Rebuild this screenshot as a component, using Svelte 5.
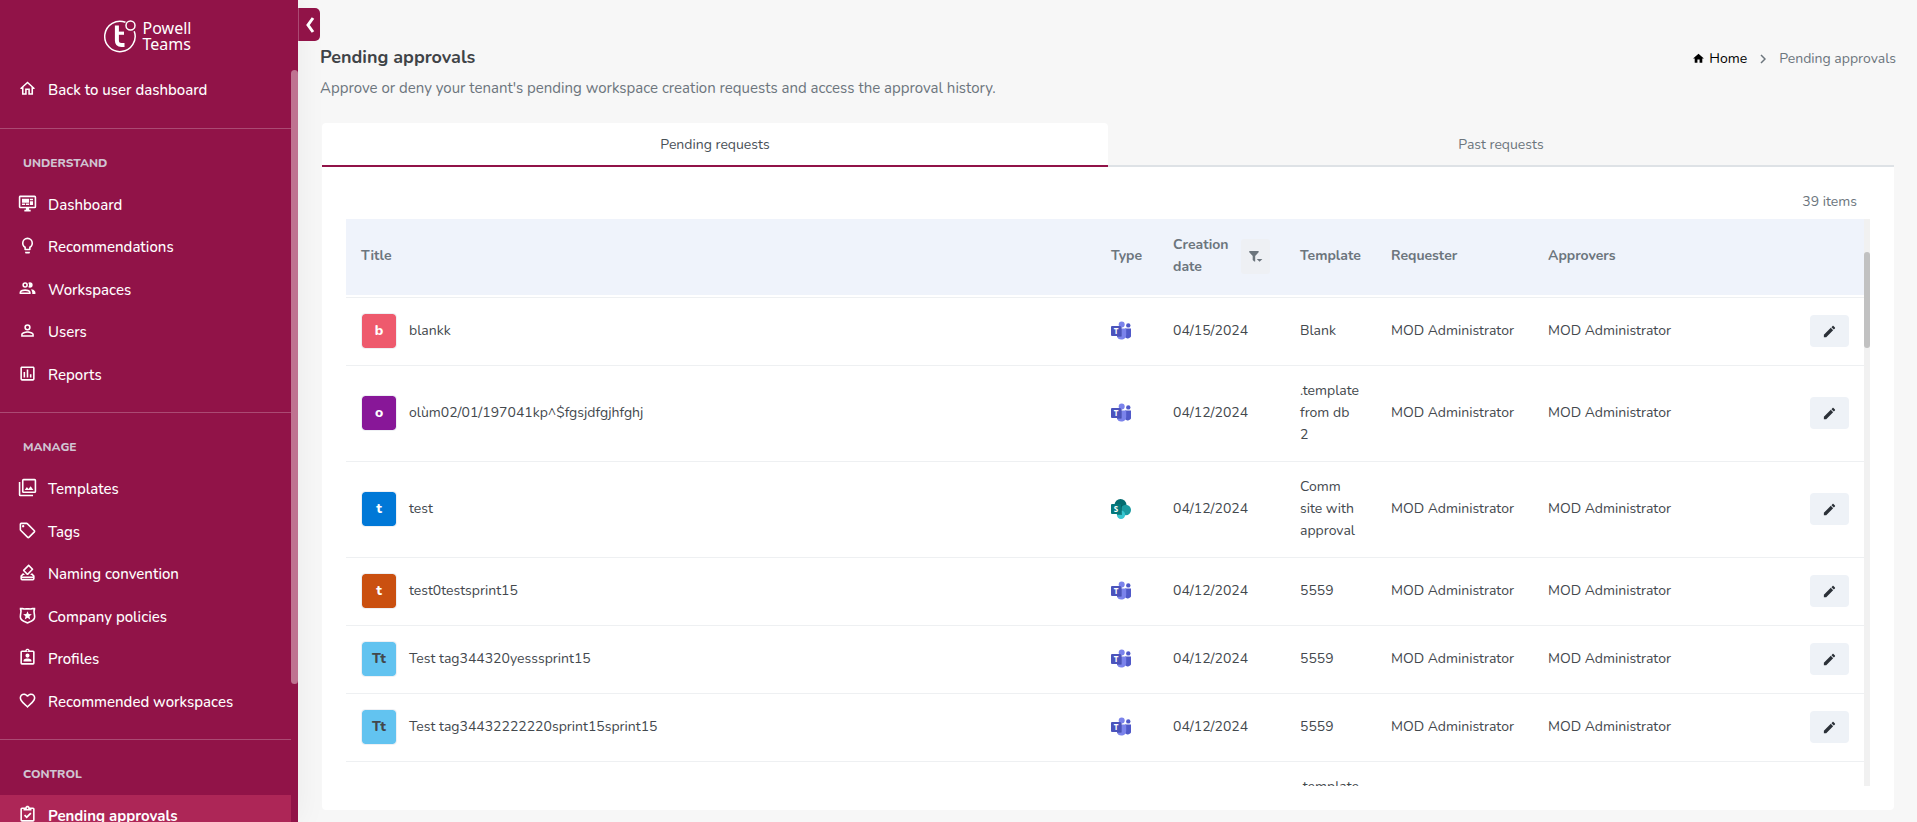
<script>
  const icons = {
    home: 'M12 5.69L17 10.19V18H15V12H9V18H7V10.19L12 5.69M12 3L3 11.500V12.500H5V20H11V14H13V20H19V12.500H21V11.500L12 3Z',
    monitor: 'M21,16V4H3V16H21M21,2A2,2 0 0,1 23,4V16A2,2 0 0,1 21,18H14V20H16V22H8V20H10V18H3C1.89,18 1,17.1 1,16V4C1,2.89 1.89,2 3,2H21M5,6H14V11H5V6M15,6H19V8H15V6M19,9V14H15V9H19M5,12H9V14H5V12M10,12H14V14H10V12Z',
    bulb: 'M12,2A7,7 0 0,1 19,9C19,11.38 17.81,13.47 16,14.74V17A1,1 0 0,1 15,18H9A1,1 0 0,1 8,17V14.74C6.19,13.47 5,11.38 5,9A7,7 0 0,1 12,2M9,21V20H15V21A1,1 0 0,1 14,22H10A1,1 0 0,1 9,21M12,4A5,5 0 0,0 7,9C7,11.05 8.23,12.81 10,13.58V16H14V13.58C15.77,12.81 17,11.05 17,9A5,5 0 0,0 12,4Z',
    people: 'M13.07 10.41A5 5 0 0 0 13.07 4.59A3.39 3.39 0 0 1 15 4A3.5 3.5 0 0 1 15 11A3.39 3.39 0 0 1 13.07 10.41M5.5 7.5A3.5 3.5 0 1 1 9 11A3.5 3.5 0 0 1 5.5 7.5M7.5 7.5A1.5 1.5 0 1 0 9 6A1.5 1.5 0 0 0 7.5 7.5M16 17V19H2V17S2 13 9 13 16 17 16 17M14 17C13.86 16.22 12.67 15 9 15S4.07 16.31 4 17M15.95 13A5.32 5.32 0 0 1 18 17V19H22V17S22 13.37 15.94 13Z',
    person: 'M12,4A4,4 0 0,1 16,8A4,4 0 0,1 12,12A4,4 0 0,1 8,8A4,4 0 0,1 12,4M12,6A2,2 0 0,0 10,8A2,2 0 0,0 12,10A2,2 0 0,0 14,8A2,2 0 0,0 12,6M12,13C14.67,13 20,14.33 20,17V20H4V17C4,14.33 9.33,13 12,13M12,14.9C9.03,14.9 5.9,16.36 5.9,17V18.1H18.1V17C18.1,16.36 14.97,14.9 12,14.9Z',
    chart: 'M9 17H7V10H9V17M13 17H11V7H13V17M17 17H15V13H17V17M19 19H5V5H19V19.1M19 3H5C3.9 3 3 3.9 3 5V19C3 20.1 3.9 21 5 21H19C20.1 21 21 20.1 21 19V5C21 3.9 20.1 3 19 3Z',
    images: 'M21,17H7V3H21M21,1H7A2,2 0 0,0 5,3V17A2,2 0 0,0 7,19H21A2,2 0 0,0 23,17V3A2,2 0 0,0 21,1M3,5H1V21A2,2 0 0,0 3,23H19V21H3M15.96,10.29L13.21,13.83L11.25,11.47L8.5,15H19.5L15.96,10.29Z',
    tag: 'M21.41,11.58L12.41,2.58A2,2 0 0,0 11,2H4A2,2 0 0,0 2,4V11A2,2 0 0,0 2.59,12.42L11.59,21.42A2,2 0 0,0 13,22A2,2 0 0,0 14.41,21.41L21.41,14.41A2,2 0 0,0 22,13A2,2 0 0,0 21.41,11.58M13,20L4,11V4H11L20,13M6.5,5A1.5,1.5 0 1,1 5,6.5A1.5,1.5 0 0,1 6.5,5Z',
    vote: 'M18,13L21,16V20C21,21.11 20.1,22 19,22H5C3.89,22 3,21.11 3,20V16L6,13H6.83L8.83,15H6.78L5,17H19L17.23,15H15.32L17.32,13H18M19,20V19H5V20H19M11.34,15L6.39,10.07C6,9.68 6,9.05 6.39,8.66L12.76,2.29C13.15,1.9 13.78,1.9 14.16,2.3L19.11,7.25C19.5,7.64 19.5,8.27 19.11,8.66L12.75,15C12.36,15.41 11.73,15.41 11.34,15M13.46,4.41L8.5,9.36L12.05,12.9L17,7.95L13.46,4.41Z',
    badge: 'M12 2.600C9.600 2.600 7.800 3 5.800 2.300H2.200V4.500C3.600 7 2 9.500 2 13.500C2 19 7.500 20.300 12 22.400C16.500 20.300 22 19 22 13.500C22 9.500 20.400 7 21.800 4.500V2.300H18.200C16.200 3 14.400 2.600 12 2.600M12 4.600C14 4.600 16 5 18.200 4.300H19.400C18.700 7.500 20 10.200 20 13.500C20 17.200 16 18.400 12 20.200C8 18.400 4 17.200 4 13.500C4 10.200 5.300 7.500 4.600 4.300H5.800C8 5 10 4.600 12 4.600M12 6.500L13.500 10.200L17.500 10.500L14.500 13.100L15.400 17L12 14.900L8.600 17L9.500 13.100L6.500 10.500L10.500 10.200Z',
    profile: 'M19,3H14.82C14.4,1.84 13.3,1 12,1C10.7,1 9.6,1.84 9.18,3H5A2,2 0 0,0 3,5V19A2,2 0 0,0 5,21H19A2,2 0 0,0 21,19V5A2,2 0 0,0 19,3M12,2.500A1,1 0 0,1 13,3.500A1,1 0 0,1 12,4.500A1,1 0 0,1 11,3.500A1,1 0 0,1 12,2.500M5,5H19V19H5V5M12,7A2.600,2.600 0 0,1 14.600,9.600A2.600,2.600 0 0,1 9.400,9.600A2.600,2.600 0 0,1 12,7M7,17V15.600C7,13.900 10,13.200 12,13.200C14,13.200 17,13.900 17,15.600V17Z',
    heart: 'M12.1,18.55L12,18.65L11.89,18.55C7.14,14.24 4,11.39 4,8.5C4,6.5 5.5,5 7.5,5C9.04,5 10.54,6 11.07,7.36H12.93C13.46,6 14.96,5 16.5,5C18.5,5 20,6.5 20,8.5C20,11.39 16.86,14.24 12.1,18.55M16.5,3C14.76,3 13.09,3.81 12,5.08C10.91,3.81 9.24,3 7.5,3C4.42,3 2,5.41 2,8.5C2,12.27 5.4,15.36 10.55,20.03L12,21.35L13.45,20.03C18.6,15.36 22,12.27 22,8.5C22,5.41 19.58,3 16.5,3Z',
    check: 'M19,3H14.82C14.4,1.84 13.3,1 12,1C10.7,1 9.6,1.84 9.18,3H5A2,2 0 0,0 3,5V19A2,2 0 0,0 5,21H19A2,2 0 0,0 21,19V5A2,2 0 0,0 19,3M12,3A1,1 0 0,1 13,4A1,1 0 0,1 12,5A1,1 0 0,1 11,4A1,1 0 0,1 12,3M7,7H17V5H19V19H5V5H7V7M7.5,13.5L9,12L11,14L15.5,9.5L17,11L11,17L7.5,13.5Z',
    pencil: 'M20.71,7.04C21.1,6.65 21.1,6 20.71,5.63L18.37,3.29C18,2.9 17.35,2.9 16.96,3.29L15.12,5.12L18.87,8.87M3,17.25V21H6.75L17.81,9.93L14.06,6.18L3,17.25Z',
    homeSolid: 'M10,20V14H14V20H19V12H22L12,3L2,12H5V20H10Z',
    filter: 'M2 3H17V5L11.500 11V20H10L7.500 17.500V11L2 5ZM14 16H23L18.500 20.500Z'
  };

  const groups = [
    { items: [{ label: 'Back to user dashboard', icon: 'home' }] },
    {
      title: 'Understand',
      items: [
        { label: 'Dashboard', icon: 'monitor' },
        { label: 'Recommendations', icon: 'bulb' },
        { label: 'Workspaces', icon: 'people' },
        { label: 'Users', icon: 'person' },
        { label: 'Reports', icon: 'chart' }
      ]
    },
    {
      title: 'Manage',
      items: [
        { label: 'Templates', icon: 'images' },
        { label: 'Tags', icon: 'tag' },
        { label: 'Naming convention', icon: 'vote' },
        { label: 'Company policies', icon: 'badge' },
        { label: 'Profiles', icon: 'profile' },
        { label: 'Recommended workspaces', icon: 'heart' }
      ]
    },
    { title: 'Control', items: [{ label: 'Pending approvals', icon: 'check', active: true }] }
  ];

  const who = 'MOD Administrator';
  const rows = [
    { initials: 'b', tone: 'coral', title: 'blankk', type: 'teams', date: '04/15/2024', template: 'Blank' },
    { initials: 'o', tone: 'purple', title: 'olùm02/01/197041kp^$fgsjdfgjhfghj', type: 'teams', date: '04/12/2024', template: '.template from db 2' },
    { initials: 't', tone: 'blue', title: 'test', type: 'sharepoint', date: '04/12/2024', template: 'Comm site with approval' },
    { initials: 't', tone: 'orange', title: 'test0testsprint15', type: 'teams', date: '04/12/2024', template: '5559' },
    { initials: 'Tt', tone: 'sky', title: 'Test tag344320yesssprint15', type: 'teams', date: '04/12/2024', template: '5559' },
    { initials: 'Tt', tone: 'sky', title: 'Test tag34432222220sprint15sprint15', type: 'teams', date: '04/12/2024', template: '5559' },
    { initials: 't', tone: 'blue', title: 'test', type: 'teams', date: '04/12/2024', template: '.template from db 2' }
  ];

  let tab = $state('pending');
</script>

{#snippet icon(name, size)}
  <svg class="icon" width={size} height={size} viewBox="0 0 24 24" aria-hidden="true">
    <path fill="currentColor" fill-rule="evenodd" d={icons[name]} />
  </svg>
{/snippet}

<div class="app">
  <aside class="sidebar">
    <a class="brand" href="#home">
      <svg width="34" height="34" viewBox="0 0 34 34" aria-hidden="true">
        <path d="M22.500 3.300A15.200 15.200 0 1 0 31.200 12.200" fill="none" stroke="#fff" stroke-width="1.500" />
        <circle cx="27.500" cy="6.500" r="4.500" fill="none" stroke="#fff" stroke-width="1.500" />
        <path d="M13.900 6.500V21.500Q13.900 26 18.400 26H21.500" fill="none" stroke="#fff" stroke-width="4" />
        <path d="M12 14.200H21" fill="none" stroke="#fff" stroke-width="3.200" />
      </svg>
      <span class="brand-text">Powell<br />Teams</span>
    </a>
    <div class="nav-wrap">
      <nav class="nav">
        {#each groups as group}
          <section class="group">
            {#if group.title}<h2 class="group-title">{group.title}</h2>{/if}
            <ul>
              {#each group.items as item}
                <li>
                  <a class="nav-link" class:active={item.active} href="#nav">
                    {@render icon(item.icon, 19)}
                    <span>{item.label}</span>
                  </a>
                </li>
              {/each}
            </ul>
          </section>
        {/each}
      </nav>
      <div class="nav-track"><div class="nav-thumb"></div></div>
    </div>
    <button class="collapse" aria-label="Collapse menu">
      <svg width="10" height="16" viewBox="0 0 10 16" aria-hidden="true">
        <path d="M8 1L3 8L8 15" fill="none" stroke="#fff" stroke-width="3" />
      </svg>
    </button>
  </aside>

  <main class="main">
    <header class="page-head">
      <div>
        <h1>Pending approvals</h1>
        <p class="lead">Approve or deny your tenant's pending workspace creation requests and access the approval history.</p>
      </div>
      <nav class="crumbs" aria-label="Breadcrumb">
        <a href="#home">{@render icon('homeSolid', 13)}Home</a>
        <svg width="6" height="10" viewBox="0 0 6 10" aria-hidden="true">
          <path d="M1 1L5 5L1 9" fill="none" stroke="#6c757d" stroke-width="1.500" />
        </svg>
        <span>Pending approvals</span>
      </nav>
    </header>

    <section class="panel">
      <div class="tabs" role="tablist">
        <button role="tab" aria-selected={tab === 'pending'} class:selected={tab === 'pending'} onclick={() => (tab = 'pending')}>Pending requests</button>
        <button role="tab" aria-selected={tab === 'past'} class:selected={tab === 'past'} onclick={() => (tab = 'past')}>Past requests</button>
      </div>
      <div class="card">
        <div class="count">39 items</div>
        <div class="scroller">
          <div class="viewport">
            <table>
              <colgroup>
                <col /><col class="c-type" /><col class="c-date" /><col class="c-template" />
                <col class="c-person" /><col class="c-person" /><col class="c-actions" />
              </colgroup>
              <thead>
                <tr>
                  <th>Title</th>
                  <th>Type</th>
                  <th>
                    <div class="date-head">
                      <span>Creation date</span>
                      <button class="filter" aria-label="Filter by creation date">{@render icon('filter', 15)}</button>
                    </div>
                  </th>
                  <th>Template</th>
                  <th>Requester</th>
                  <th>Approvers</th>
                  <th></th>
                </tr>
              </thead>
              <tbody>
                <tr class="spacer"><td colspan="7"></td></tr>
                {#each rows as row}
                  <tr>
                    <td>
                      <div class="title-cell">
                        <span class="avatar {row.tone}">{row.initials}</span>
                        <span>{row.title}</span>
                      </div>
                    </td>
                    <td>
                      {#if row.type === 'teams'}
                        <svg class="type-icon" width="20" height="20" viewBox="0 0 20 20" role="img" aria-label="Teams">
                          <circle cx="17.300" cy="4.400" r="2.200" fill="#5059c9" />
                          <path d="M14 7.400H20V13A3.400 3.400 0 0 1 13.500 15Z" fill="#5059c9" />
                          <circle cx="10.700" cy="3.500" r="3" fill="#7b83eb" />
                          <path d="M6 7.400H15.200V14A4.900 4.900 0 0 1 6 16Z" fill="#7b83eb" />
                          <path d="M6 6H10.500V15.500H6Z" fill="#3f479f" />
                          <rect x="0" y="5" width="10" height="10" rx="1" fill="#4b53bc" />
                          <text x="5" y="12.800" text-anchor="middle" class="glyph">T</text>
                        </svg>
                      {:else}
                        <svg class="type-icon" width="20" height="20" viewBox="0 0 20 20" role="img" aria-label="SharePoint">
                          <circle cx="9.500" cy="6" r="6" fill="#036c70" />
                          <circle cx="14.800" cy="11" r="5.200" fill="#1a9ba1" />
                          <circle cx="10" cy="15.800" r="4.200" fill="#37c6d0" />
                          <path d="M6 6H11V16H6Z" fill="#035b5e" opacity="0.600" />
                          <rect x="0" y="5" width="10" height="10" rx="1" fill="#03787c" />
                          <text x="5" y="12.800" text-anchor="middle" class="glyph">S</text>
                        </svg>
                      {/if}
                    </td>
                    <td>{row.date}</td>
                    <td>{row.template}</td>
                    <td>{who}</td>
                    <td>{who}</td>
                    <td class="actions">
                      <button class="edit" aria-label="Review {row.title}">{@render icon('pencil', 15)}</button>
                    </td>
                  </tr>
                {/each}
              </tbody>
            </table>
          </div>
          <div class="track"><div class="thumb"></div></div>
        </div>
      </div>
    </section>
  </main>
</div>

<style>
  :global(body) {
    background: #f7f7f7;
  }
  .app {
    display: flex;
    height: 100vh;
    overflow: hidden;
    font-family: Nunito, Lato, sans-serif;
    font-size: 15px;
    line-height: 1.5;
    color: #43484d;
  }
  .app :global(*) {
    box-sizing: border-box;
  }
  a {
    color: inherit;
    text-decoration: none;
  }
  button {
    border: 0;
    padding: 0;
    font: inherit;
    color: inherit;
    cursor: pointer;
  }
  .icon {
    display: block;
    flex: none;
  }

  .sidebar {
    position: relative;
    z-index: 1;
    flex: none;
    display: flex;
    flex-direction: column;
    width: 298px;
    background: #911348;
    color: #fff;
    box-shadow: 0 0 30px rgba(0, 0, 0, 0.06);
  }
  .brand {
    display: flex;
    justify-content: center;
    gap: 6px;
    height: 69px;
    padding: 19px 4px 0 0;
  }
  .brand-text {
    font-family: 'Noto Sans', sans-serif;
    font-size: 16px;
    line-height: 16px;
    padding-top: 1px;
  }
  .nav-wrap {
    flex: 1;
    min-height: 0;
    display: flex;
  }
  .nav {
    flex: 1;
    overflow: hidden;
  }
  .nav-track {
    width: 7px;
    padding-top: 1px;
  }
  .nav-thumb {
    height: 614px;
    border-radius: 4px;
    background: #bf7391;
  }
  .group + .group {
    margin-top: 16px;
    padding-top: 25px;
    border-top: 1px solid #ab4a73;
  }
  .group-title {
    margin: 0 0 12px;
    padding-left: 23px;
    font-size: 12px;
    line-height: 18px;
    font-weight: 800;
    text-transform: uppercase;
    color: #d0c4d2;
  }
  ul {
    list-style: none;
    margin: 0;
    padding: 0;
  }
  .nav-link {
    display: flex;
    align-items: center;
    gap: 11px;
    padding: 10px 18px;
    font-weight: 500;
  }
  .nav-link :global(.icon) {
    margin-bottom: 3px;
  }
  .nav-link.active {
    background: #ad2657;
    font-weight: 700;
  }
  .collapse {
    position: absolute;
    top: 8px;
    left: 100%;
    display: grid;
    place-items: center;
    width: 22px;
    height: 33px;
    background: #911348;
    border-left: 1px solid #ab4a73;
    border-radius: 0 5px 5px 0;
  }

  .main {
    flex: 1;
    min-width: 0;
    display: flex;
    flex-direction: column;
    padding: 43px 23px 12px 24px;
  }
  .page-head {
    display: flex;
    justify-content: space-between;
    margin: 0 -2px 23px;
  }
  h1 {
    margin: 0 0 6px;
    font-size: 18px;
    line-height: 28px;
    font-weight: 700;
    color: #3f4347;
  }
  .lead {
    margin: 0;
    line-height: 23px;
    color: #6c757d;
  }
  .crumbs {
    display: flex;
    align-items: center;
    align-self: flex-start;
    gap: 13px;
    padding-top: 5px;
    font-size: 14px;
    color: #6c757d;
  }
  .crumbs a {
    display: flex;
    align-items: center;
    gap: 4px;
    color: #000;
  }

  .panel {
    flex: 1;
    min-height: 0;
    display: flex;
    flex-direction: column;
    font-size: 14px;
  }
  .tabs {
    display: grid;
    grid-template-columns: 1fr 1fr;
  }
  .tabs button {
    height: 44px;
    background: none;
    border-bottom: 2px solid #dee2e6;
    color: #6c757d;
  }
  .tabs button.selected {
    background: #fff;
    border-bottom-color: #911348;
    border-radius: 4px 4px 0 0;
    color: #495057;
  }
  .card {
    flex: 1;
    min-height: 0;
    display: flex;
    flex-direction: column;
    padding: 23px 24px 24px;
    background: #fff;
    border-radius: 0 0 4px 4px;
  }
  .count {
    padding: 0 13px 6px 0;
    line-height: 23px;
    text-align: right;
    color: #6c757d;
  }
  .scroller {
    flex: 1;
    min-height: 0;
    display: flex;
  }
  .viewport {
    flex: 1;
    overflow: hidden;
  }
  .track {
    width: 6px;
    padding-top: 33px;
    background: #f1f1f1;
  }
  .thumb {
    height: 96px;
    border-radius: 3px;
    background: #c1c1c1;
  }

  table {
    width: 100%;
    table-layout: fixed;
    border-collapse: separate;
    border-spacing: 0;
    line-height: 22px;
  }
  .c-type {
    width: 62px;
  }
  .c-date {
    width: 127px;
  }
  .c-template {
    width: 91px;
  }
  .c-person {
    width: 157px;
  }
  .c-actions {
    width: 174px;
  }
  th {
    height: 76px;
    padding: 0 15px 2px;
    background: #eff3fb;
    text-align: left;
    font-weight: 700;
    color: #6c757d;
  }
  td {
    height: 68px;
    padding: 14px 15px 15px;
    border-bottom: 1px solid #eef0f2;
  }
  .spacer td {
    height: 3px;
    padding: 0;
  }
  .date-head {
    display: flex;
    align-items: center;
    justify-content: space-between;
  }
  .filter {
    flex: none;
    display: grid;
    place-items: center;
    width: 29px;
    height: 35px;
    border-radius: 3px;
    background: #eef0f4;
  }
  .title-cell {
    display: flex;
    align-items: center;
    gap: 12px;
  }
  .avatar {
    display: grid;
    place-items: center;
    width: 36px;
    height: 36px;
    border: 1px solid #eef0f4;
    border-radius: 4px;
    background-clip: padding-box;
    font-weight: 800;
    color: #fff;
  }
  .coral {
    background-color: #ee5a6d;
  }
  .purple {
    background-color: #881798;
  }
  .blue {
    background-color: #0078d7;
  }
  .orange {
    background-color: #ca5010;
  }
  .sky {
    background-color: #62c3f0;
    color: #43474b;
  }
  .type-icon {
    display: block;
  }
  .glyph {
    font-family: 'Open Sans', sans-serif;
    font-size: 8px;
    font-weight: 700;
    fill: #fff;
  }
  .actions {
    text-align: right;
  }
  .edit {
    display: inline-grid;
    place-items: center;
    width: 39px;
    height: 32px;
    vertical-align: middle;
    border-radius: 4px;
    background: #eef2f7;
    color: #2b3138;
  }
</style>
